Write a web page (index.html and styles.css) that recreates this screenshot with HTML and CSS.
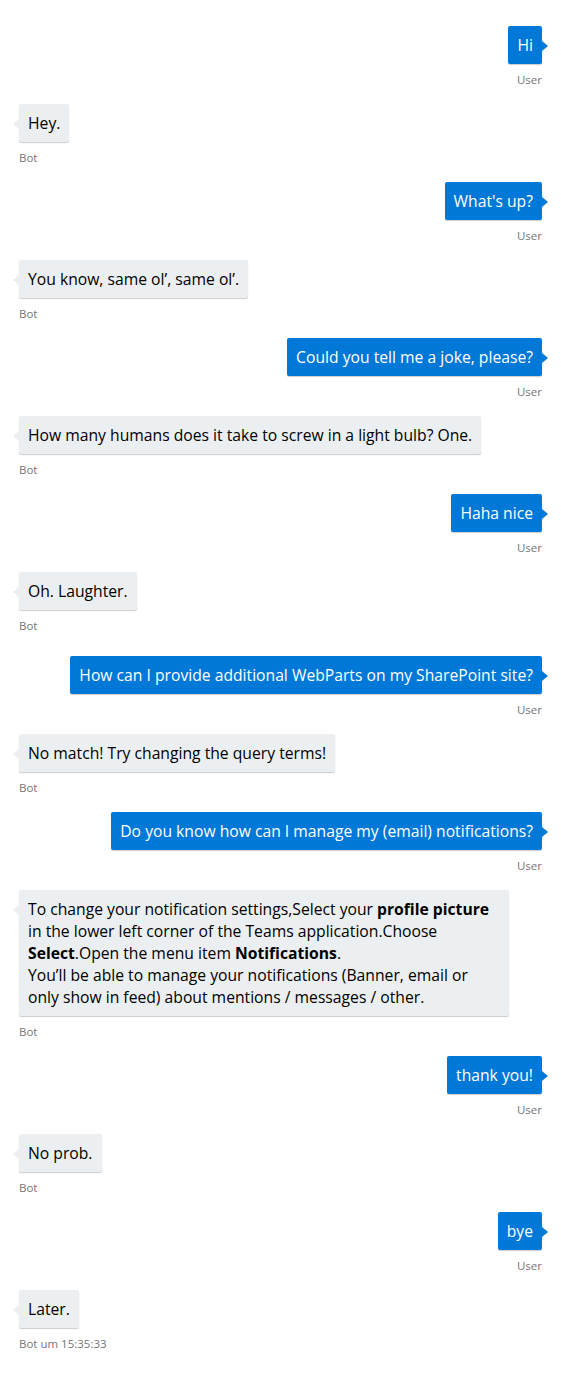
FILE: index.html
```html
<!DOCTYPE html>
<html>
<head>
<meta charset="utf-8">
<link rel="stylesheet" href="styles.css">
</head>
<body>
<div class="chat">
  <div class="msg me"><div class="bubble">Hi</div><div class="from">User</div></div>
  <div class="msg bot"><div class="bubble">Hey.</div><div class="from">Bot</div></div>
  <div class="msg me"><div class="bubble">What's up?</div><div class="from">User</div></div>
  <div class="msg bot"><div class="bubble">You know, same ol’, same ol’.</div><div class="from">Bot</div></div>
  <div class="msg me"><div class="bubble">Could you tell me a joke, please?</div><div class="from">User</div></div>
  <div class="msg bot"><div class="bubble">How many humans does it take to screw in a light bulb? One.</div><div class="from">Bot</div></div>
  <div class="msg me"><div class="bubble">Haha nice</div><div class="from">User</div></div>
  <div class="msg bot"><div class="bubble">Oh. Laughter.</div><div class="from">Bot</div></div>
  <div class="msg me spaced"><div class="bubble">How can I provide additional WebParts on my SharePoint site?</div><div class="from">User</div></div>
  <div class="msg bot"><div class="bubble">No match! Try changing the query terms!</div><div class="from">Bot</div></div>
  <div class="msg me"><div class="bubble">Do you know how can I manage my (email) notifications?</div><div class="from">User</div></div>
  <div class="msg bot"><div class="bubble">To change your notification settings,Select your <b>profile picture</b> in the lower left corner of the Teams application.Choose <b>Select</b>.Open the menu item <b>Notifications</b>.<br>You’ll be able to manage your notifications (Banner, email or only show in feed) about mentions / messages / other.</div><div class="from">Bot</div></div>
  <div class="msg me"><div class="bubble">thank you!</div><div class="from">User</div></div>
  <div class="msg bot"><div class="bubble">No prob.</div><div class="from">Bot</div></div>
  <div class="msg me"><div class="bubble">bye</div><div class="from">User</div></div>
  <div class="msg bot"><div class="bubble">Later.</div><div class="from">Bot um 15:35:33</div></div>
</div>
</body>
</html>
```
FILE: styles.css
```css
html, body {
  margin: 0;
  padding: 0;
  background: #ffffff;
}
.chat {
  display: flex;
  flex-direction: column;
  gap: 16px;
  padding: 26px 19px 20px 19px;
  font-family: "Open Sans", "Noto Sans", sans-serif;
}
.msg {
  display: flex;
  flex-direction: column;
}
.msg.spaced { margin-top: 6px; }
.msg.me { align-items: flex-end; }
.msg.bot { align-items: flex-start; }
.bubble {
  position: relative;
  font-size: 15.7px;
  line-height: 22px;
  padding: 8px 9px;
  border-radius: 2px;
  box-shadow: 0 1px 1px rgba(0, 0, 0, 0.2);
  max-width: 490px;
  box-sizing: border-box;
}
.me .bubble {
  background: #0078d7;
  color: #ffffff;
}
.bot .bubble {
  background: #eceff1;
  color: #000000;
}
.bubble::after {
  content: "";
  position: absolute;
  top: 15px;
  width: 0;
  height: 0;
  border-top: 5px solid transparent;
  border-bottom: 5px solid transparent;
}
.me .bubble::after {
  right: -6px;
  border-left: 6px solid #0078d7;
}
.bot .bubble::after {
  left: -6px;
  border-right: 6px solid #eceff1;
}
.from {
  margin-top: 8px;
  font-size: 11.5px;
  line-height: 16px;
  color: #767676;
}
```
